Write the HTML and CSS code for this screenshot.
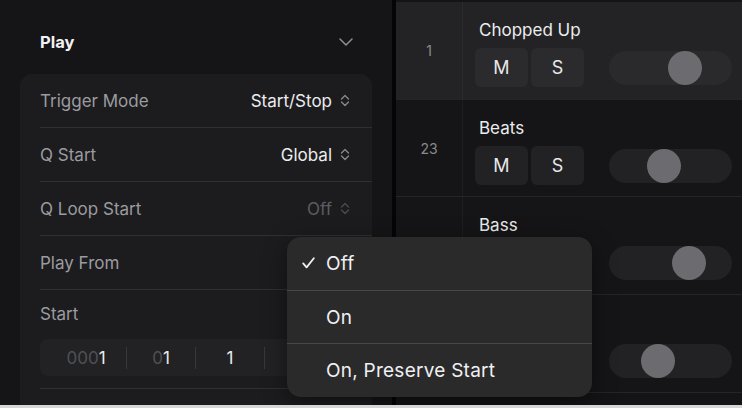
FILE: index.html
```html
<!DOCTYPE html>
<html>
<head>
<meta charset="utf-8">
<link rel="stylesheet" href="styles.css">
</head>
<body>
<div class="screen">
  <div class="main">
    <div class="left">
      <div class="header">
        <span class="header-title">Play</span>
        <svg class="chev-down" width="14" height="8" viewBox="0 0 14 8"><path d="M1 1 L7 7 L13 1" fill="none" stroke="#8e8e93" stroke-width="1.5" stroke-linecap="round" stroke-linejoin="round"/></svg>
      </div>
      <div class="card">
        <div class="row">
          <span class="label">Trigger Mode</span>
          <span class="value">Start/Stop<svg class="updown" width="10" height="13" viewBox="0 0 10 13"><path d="M1.5 5 L5 1.5 L8.5 5 M1.5 8 L5 11.5 L8.5 8" fill="none" stroke="#8a8a8e" stroke-width="1.3" stroke-linecap="round" stroke-linejoin="round"/></svg></span>
        </div>
        <div class="row">
          <span class="label">Q Start</span>
          <span class="value">Global<svg class="updown" width="10" height="13" viewBox="0 0 10 13"><path d="M1.5 5 L5 1.5 L8.5 5 M1.5 8 L5 11.5 L8.5 8" fill="none" stroke="#8a8a8e" stroke-width="1.3" stroke-linecap="round" stroke-linejoin="round"/></svg></span>
        </div>
        <div class="row">
          <span class="label">Q Loop Start</span>
          <span class="value dim">Off<svg class="updown" width="10" height="13" viewBox="0 0 10 13"><path d="M1.5 5 L5 1.5 L8.5 5 M1.5 8 L5 11.5 L8.5 8" fill="none" stroke="#4c4c50" stroke-width="1.3" stroke-linecap="round" stroke-linejoin="round"/></svg></span>
        </div>
        <div class="row">
          <span class="label">Play From</span>
        </div>
        <div class="row start-row">
          <span class="label">Start</span>
          <div class="field">
            <span class="seg seg-first"><span class="faint">000</span>1</span>
            <span class="seg"><span class="faint">0</span>1</span>
            <span class="seg">1</span>
            <span class="seg"><span class="faint">0</span></span>
          </div>
        </div>
      </div>
    </div>
    <div class="divider"></div>
    <div class="right">
      <div class="track selected">
        <div class="num">1</div>
        <div class="track-body">
          <div class="track-name">Chopped Up</div>
          <div class="controls">
            <span class="btn">M</span><span class="btn">S</span>
            <span class="slider"><span class="knob" style="left:59px"></span></span>
          </div>
        </div>
      </div>
      <div class="track">
        <div class="num">23</div>
        <div class="track-body">
          <div class="track-name">Beats</div>
          <div class="controls">
            <span class="btn">M</span><span class="btn">S</span>
            <span class="slider"><span class="knob" style="left:38px"></span></span>
          </div>
        </div>
      </div>
      <div class="track">
        <div class="num"></div>
        <div class="track-body">
          <div class="track-name">Bass</div>
          <div class="controls">
            <span class="btn">M</span><span class="btn">S</span>
            <span class="slider"><span class="knob" style="left:63px"></span></span>
          </div>
        </div>
      </div>
      <div class="track">
        <div class="num"></div>
        <div class="track-body">
          <div class="track-name">Keys</div>
          <div class="controls">
            <span class="btn">M</span><span class="btn">S</span>
            <span class="slider"><span class="knob" style="left:32px"></span></span>
          </div>
        </div>
      </div>
    </div>
    <div class="menu">
      <div class="menu-item"><svg class="check" width="13" height="12" viewBox="0 0 13 12"><path d="M1.2 6.4 L4.6 10.4 L11.8 1.2" fill="none" stroke="#f0f0f2" stroke-width="1.8" stroke-linecap="round" stroke-linejoin="round"/></svg>Off</div>
      <div class="menu-item">On</div>
      <div class="menu-item">On, Preserve Start</div>
    </div>
  </div>
  <div class="bottom-strip"></div>
</div>
</body>
</html>
```

FILE: styles.css
```css
* { box-sizing: border-box; }
html, body { margin: 0; padding: 0; }
body {
  width: 742px;
  height: 408px;
  overflow: hidden;
  background: #131315;
  font-family: Inter, "Noto Sans", "Liberation Sans", sans-serif;
  color: #e8e8ea;
}
.screen { display: flex; flex-direction: column; height: 408px; }
.main { position: relative; display: flex; height: 405px; overflow: hidden; }
.bottom-strip { height: 3px; background: #d6d6d8; }

.left { width: 392px; background: #151517; display: flex; flex-direction: column; }
.header {
  display: flex; align-items: center; justify-content: space-between;
  height: 24px; margin: 30px 39px 20px 40px;
}
.header-title { font-size: 16.5px; font-weight: 700; color: #f2f2f4; }
.chev-down { display: block; }
.card {
  margin-left: 20px; width: 352px; flex: 1;
  background: #1c1c1e; border-radius: 12px 12px 0 0;
  padding-left: 20px;
}
.row {
  height: 54px; display: flex; align-items: center; justify-content: space-between;
  border-bottom: 1px solid #303033; padding-right: 22px;
}
.label { font-size: 17px; color: #9b9ba0; }
.value { font-size: 17px; color: #ececee; display: flex; align-items: center; gap: 8px; }
.value.dim { color: #5c5c60; }
.updown { display: block; }
.start-row {
  height: 99px; flex-direction: column; align-items: flex-start; justify-content: flex-start;
  padding-top: 14px;
}
.start-row .label { line-height: 20px; }
.field {
  margin-top: 15px; height: 37px; width: 330px;
  background: #222225; border-radius: 8px; display: flex; align-items: center;
}
.seg {
  width: 69px; text-align: center; font-size: 17px; color: #ececee;
  border-right: 1px solid #38383b; line-height: 22px;
}
.seg-first { width: 87px; padding-left: 6px; }
.seg:last-child { border-right: none; }
.faint { color: #505054; }

.divider { width: 4px; background: #050506; }
.right { flex: 1; padding-top: 2px; background: #141416; }
.track {
  height: 98px; display: flex; border-bottom: 1px solid #252527;
  background: #151517;
}
.track:nth-child(2) { height: 97px; }
.track.selected { background: #232326; }
.num {
  width: 67px; border-right: 1px solid #1e1e20;
  display: flex; align-items: center; justify-content: center;
  font-size: 14px; color: #8a8a8e;
}
.track.selected .num { border-right-color: #2b2b2e; }
.track-body { flex: 1; padding: 18px 0 0 12px; }
.track-name { font-size: 17px; line-height: 20px; padding-left: 4px; color: #ececee; }
.controls { display: flex; align-items: center; margin-top: 8px; }
.btn {
  width: 53px; height: 39px; margin-right: 3px;
  display: flex; align-items: center; justify-content: center;
  background: #2b2b2e; border-radius: 6px; font-size: 18px; color: #e8e8ea;
}
.track:not(.selected) .btn { background: #222225; }
.slider {
  position: relative; margin-left: 22px; width: 123px; height: 34px;
  border-radius: 17px; background: #2a2a2d;
}
.track:not(.selected) .slider { background: #222225; }
.knob {
  position: absolute; top: 0; width: 34px; height: 34px; border-radius: 50%;
  background: #6c6c70;
}

.menu {
  position: absolute; left: 287px; top: 237px; width: 305px; height: 160px;
  background: #2a2a2b; border-radius: 14px;
  box-shadow: 0 6px 24px rgba(0,0,0,0.45);
  display: flex; flex-direction: column;
}
.menu-item {
  flex: 1; display: flex; align-items: center; padding-left: 39px;
  font-size: 19px; letter-spacing: 0.25px; color: #f0f0f2; position: relative;
  border-bottom: 1px solid #48484b;
}
.menu-item:last-child { border-bottom: none; }
.check { position: absolute; left: 15px; top: 50%; margin-top: -6px; display: block; }
```
